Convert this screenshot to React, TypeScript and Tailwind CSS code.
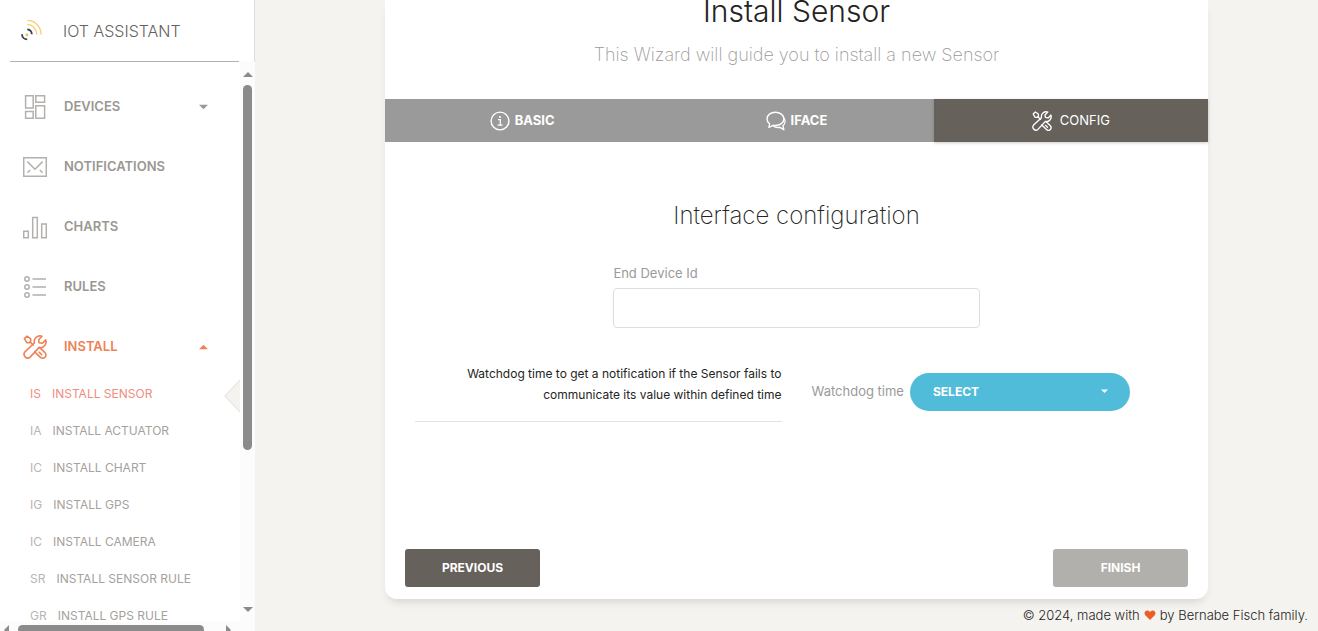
import type { ReactNode } from "react";

type IconProps = { className?: string };

function ToolsIcon({ className }: IconProps) {
  return (
    <svg viewBox="0 0 24 24" className={className} fill="none" stroke="currentColor" strokeWidth="1.6" strokeLinejoin="round" strokeLinecap="round" aria-hidden="true">
      <path d="M1.4 3.6 4 1.2 7.6 3.6 7.8 6 6.2 7.7 3.8 7.6Z" />
      <path d="M7.2 7.2 10.3 10" />
      <path d="M19 1.3C14.6-.2 10.4 3.4 11.4 8L1.9 16.9a3.7 3.7 0 0 0 5.2 5.2L16 12.6c4.4 1 8.2-3.2 6.7-7.7L19.4 8.3 16.1 7.7 15.6 4.7Z" />
      <path d="M16.4 12.4 22 17.7a3.2 3.2 0 0 1-4.6 4.6L11.7 16.9" />
      <path d="M16.2 17.2 18.6 19.6" />
    </svg>
  );
}

function LayoutIcon({ className }: IconProps) {
  return (
    <svg viewBox="0 0 24 24" className={className} fill="none" stroke="currentColor" strokeWidth="1.5" aria-hidden="true">
      <path d="M2.6.7h7.6v12.4H2.6zM12.8.7h8.8v6.6h-8.8zM2.6 16.5h7.6v6.8H2.6zM12.8 10.7h8.8v12.6h-8.8z" />
    </svg>
  );
}

function MailIcon({ className }: IconProps) {
  return (
    <svg viewBox="0 0 24 24" className={className} fill="none" stroke="currentColor" strokeWidth="1.5" aria-hidden="true">
      <path d="M.7 2.7h22.6v18.6H.7z" />
      <path d="M4.4 6.6 12 14.2l7.6-7.6M4.4 17.8l2.8-2.8M19.6 17.8 16.8 15" />
    </svg>
  );
}

function ChartIcon({ className }: IconProps) {
  return (
    <svg viewBox="0 0 24 24" className={className} fill="none" stroke="currentColor" strokeWidth="1.5" aria-hidden="true">
      <path d="M.7 16.2h4.600v6.500H.7zM9.7 2.500h4.600v20.200H9.7zM18.700 9h4.600v13.700h-4.600z" />
    </svg>
  );
}

function ListIcon({ className }: IconProps) {
  return (
    <svg viewBox="0 0 24 24" className={className} fill="none" stroke="currentColor" strokeWidth="1.5" aria-hidden="true">
      <circle cx="4" cy="4" r="2.2" />
      <circle cx="4" cy="12" r="2.2" />
      <circle cx="4" cy="20" r="2.2" />
      <path d="M9.5 4H23M9.5 12H23M9.5 20H23" />
    </svg>
  );
}

function InfoIcon({ className }: IconProps) {
  return (
    <svg viewBox="0 0 20 20" className={className} fill="none" stroke="currentColor" strokeWidth="1.4" aria-hidden="true">
      <circle cx="10" cy="10" r="8.9" />
      <path d="M8 8.6h2.3v5.5M7.6 14.2h5" strokeWidth="1.2" />
      <circle cx="10" cy="5.9" r="1" fill="currentColor" stroke="none" />
    </svg>
  );
}

function ChatIcon({ className }: IconProps) {
  return (
    <svg viewBox="0 0 20 20" className={className} fill="none" stroke="currentColor" strokeWidth="1.4" strokeLinejoin="round" aria-hidden="true">
      <path d="M9.3 1.3C4.8 1.3 1 4 1 7.9c0 2.1 1 3.8 2.6 5l-.7 3.6 4.1-2.2c.7.2 1.5.2 2.3.2 4.8 0 8.6-2.7 8.6-6.6S14 1.3 9.3 1.3Z" />
      <path d="M17.8 6.8c1.8 2.6 1.6 6-.8 7.9l.8 4-3.900-2.400c-2.500.5-5.200-.1-6.900-1.900" />
    </svg>
  );
}

function SignalLogo() {
  return (
    <svg viewBox="0 0 22 22" className="size-[22px]" fill="none" strokeWidth="1.4" aria-hidden="true">
      <path d="M6 .2A14 14 0 0 1 20 14.500M6 4.400A10 10 0 0 1 15.800 14.500" stroke="#f8d07c" />
      <path d="M6.300 9.400A5 5 0 0 1 10.800 14.200" stroke="#34414b" strokeWidth="1.800" />
      <path d="M1 14.200A5.300 5.300 0 0 0 6.200 19.400" stroke="#34414b" strokeWidth="1.800" />
      <circle cx="5.900" cy="14.800" r="1.400" fill="#f5bd4c" />
    </svg>
  );
}

type Direction = "up" | "down" | "left" | "right";

const trianglePoints: Record<Direction, string> = {
  up: "0,7 5,2 10,7",
  down: "0,2 10,2 5,7",
  left: "7,0 7,10 2,5",
  right: "3,0 3,10 8,5",
};

function Triangle({ direction, className }: { direction: Direction; className?: string }) {
  return (
    <svg viewBox="0 0 10 10" className={className} fill="currentColor" aria-hidden="true">
      <polygon points={trianglePoints[direction]} />
    </svg>
  );
}

const navItems: { label: string; Icon: (p: IconProps) => ReactNode; caret?: Direction; active?: boolean }[] = [
  { label: "DEVICES", Icon: LayoutIcon, caret: "down" },
  { label: "NOTIFICATIONS", Icon: MailIcon },
  { label: "CHARTS", Icon: ChartIcon },
  { label: "RULES", Icon: ListIcon },
  { label: "INSTALL", Icon: ToolsIcon, caret: "up", active: true },
];

const subItems = [
  { short: "IS", label: "INSTALL SENSOR", active: true },
  { short: "IA", label: "INSTALL ACTUATOR" },
  { short: "IC", label: "INSTALL CHART" },
  { short: "IG", label: "INSTALL GPS" },
  { short: "IC", label: "INSTALL CAMERA" },
  { short: "SR", label: "INSTALL SENSOR RULE" },
  { short: "GR", label: "INSTALL GPS RULE" },
];

function Sidebar() {
  return (
    <aside className="flex w-[255px] shrink-0 flex-col bg-white">
      <div className="border-r border-[#dddddd] pl-[10px] pr-[15px]">
        <a href="#home" className="flex h-[62px] items-center gap-5 border-b border-[#b5b2ae] pl-[11px] text-[16px] font-light text-[#66615b]">
          <SignalLogo />
          <span>IOT ASSISTANT</span>
        </a>
      </div>
      <div className="flex min-h-0 flex-1">
        <nav className="min-w-0 flex-1 overflow-hidden pt-[15px]">
          <ul>
            {navItems.map(({ label, Icon, caret, active }) => (
              <li key={label}>
                <a
                  href={"#" + label.toLowerCase()}
                  className={
                    active
                      ? "flex h-[60px] items-center gap-[17px] pl-[23px] pr-[32px] text-[13px] font-semibold text-[#ef8157]"
                      : "flex h-[60px] items-center gap-[17px] pl-[23px] pr-[32px] text-[13px] font-semibold text-[#9b9792]"
                  }
                >
                  <Icon className={active ? "size-6" : "size-6 text-[#b3b0ad]"} />
                  <span className="flex-1">{label}</span>
                  {caret && <Triangle direction={caret} className="size-[9px]" />}
                </a>
              </li>
            ))}
          </ul>
          <ul className="-mt-[2px]">
            {subItems.map(({ short, label, active }) => (
              <li key={label} className="relative">
                <a
                  href={"#" + label.toLowerCase().replace(/ /g, "-")}
                  className={
                    active
                      ? "flex h-[37px] items-center gap-[11px] pl-[30px] text-[12px] text-[#f08c80]"
                      : "flex h-[37px] items-center gap-[11px] pl-[30px] text-[12px] text-[#a5a19d]"
                  }
                >
                  <span className={active ? "" : "text-[#b8b5b1]"}>{short}</span>
                  <span>{label}</span>
                </a>
                {active && (
                  <svg viewBox="0 0 16 32" className="absolute right-0 top-[5px] h-8 w-4" aria-hidden="true">
                    <path d="M16 0 .7 16 16 32Z" fill="#f4f3ef" />
                    <path d="M16 0 .7 16 16 32" fill="none" stroke="#dddddd" />
                  </svg>
                )}
              </li>
            ))}
          </ul>
        </nav>
        <div className="flex w-[15px] flex-col items-center bg-[#fcfcfc] pb-[7px] pt-2 text-[#8b8b8b]">
          <Triangle direction="up" className="size-[10px]" />
          <div className="mt-[5px] h-[365px] w-[9px] rounded-full bg-[#8b8b8b]" />
          <div className="flex-1" />
          <Triangle direction="down" className="size-[10px]" />
        </div>
      </div>
      <div className="h-[9px] shrink-0 overflow-hidden bg-[#fcfcfc]">
        <div className="flex h-[15px] items-center pl-[2px] pr-[22px] text-[#8b8b8b]">
          <Triangle direction="left" className="size-[10px]" />
          <div className="ml-[6px] h-[9px] w-[186px] rounded-full bg-[#8b8b8b]" />
          <div className="flex-1" />
          <Triangle direction="right" className="size-[10px]" />
        </div>
      </div>
    </aside>
  );
}

export default function App() {
  return (
    <div className="flex h-screen overflow-hidden bg-[#f4f3ef] font-['Inter','Liberation_Sans',sans-serif] text-[#252422]">
      <Sidebar />
      <main className="flex min-w-0 flex-1 flex-col">
        <section className="ml-[130px] mr-[110px] rounded-b-xl bg-white shadow-[0_6px_10px_-4px_rgba(0,0,0,0.15)]">
          <header className="text-center">
            <h1 className="text-[30px] font-light leading-[22px]">Install Sensor</h1>
            <p className="mt-[21px] pb-8 text-[18px] font-extralight leading-6 text-[#9a9a9a]">
              This Wizard will guide you to install a new Sensor
            </p>
          </header>
          <div role="tablist" className="grid h-[43px] grid-cols-3 bg-[#9a9a9a] text-[13px] text-white">
            <button type="button" role="tab" aria-selected="false" className="flex items-center justify-center gap-[5px] font-bold">
              <InfoIcon className="size-5" />
              BASIC
            </button>
            <button type="button" role="tab" aria-selected="false" className="flex items-center justify-center gap-[5px] font-bold">
              <ChatIcon className="size-5" />
              IFACE
            </button>
            <button type="button" role="tab" aria-selected="true" className="flex items-center justify-center gap-2 bg-[#66615b] shadow-[0_1px_3px_rgba(0,0,0,0.2)]">
              <ToolsIcon className="size-5" />
              CONFIG
            </button>
          </div>
          <form className="px-[30px] pt-[58px]">
            <h2 className="text-center text-[24px] font-extralight leading-8">Interface configuration</h2>
            <div className="mx-auto mt-[33px] w-[48%]">
              <label htmlFor="device-id" className="block text-[13px] leading-[17px] text-[#9a9a9a]">
                End Device Id
              </label>
              <input id="device-id" type="text" className="mt-[6px] h-10 w-full rounded border border-[#dddddd] bg-white px-3 text-[14px] outline-none" />
            </div>
            <div className="mt-[35px] grid grid-cols-2 gap-[30px]">
              <p className="border-b border-[#e3e3e3] pb-4 text-right text-[12px] leading-[21px]">
                Watchdog time to get a notification if the Sensor fails to communicate its value within defined time
              </p>
              <div className="flex items-center gap-[6px] self-start pt-[10px]">
                <label htmlFor="watchdog" className="whitespace-nowrap text-[13px] text-[#9a9a9a]">
                  Watchdog time
                </label>
                <div className="relative w-[220px]">
                  <select id="watchdog" defaultValue="" className="h-[38px] w-full appearance-none rounded-full bg-[#51bcda] px-[23px] text-[12px] font-bold text-white">
                    <option value="">SELECT</option>
                  </select>
                  <Triangle direction="down" className="pointer-events-none absolute right-[22px] top-[15px] size-[7px] text-white" />
                </div>
              </div>
            </div>
            <div className="-mx-[10px] mt-[127px] flex justify-between pb-3 text-[12px] font-bold text-white">
              <button type="button" className="h-[38px] w-[135px] rounded-[3px] bg-[#66615b]">PREVIOUS</button>
              <button type="submit" className="h-[38px] w-[135px] rounded-[3px] bg-[#b1b0ac]">FINISH</button>
            </div>
          </form>
        </section>
        <footer className="flex items-center justify-end gap-1 pr-[10px] pt-[6px] text-[13px] font-light leading-5">
          <span>© 2024, made with</span>
          <svg viewBox="0 0 12 12" className="size-3" fill="#eb5e28" role="img" aria-label="love">
            <path d="M6 11 1.3 6.3C-.2 4.7.6 1.5 3.2 1.5c1.3 0 2.2.7 2.8 1.6.6-.9 1.5-1.6 2.8-1.6 2.6 0 3.4 3.2 1.9 4.800Z" />
          </svg>
          <span>by Bernabe Fisch family.</span>
        </footer>
      </main>
    </div>
  );
}
